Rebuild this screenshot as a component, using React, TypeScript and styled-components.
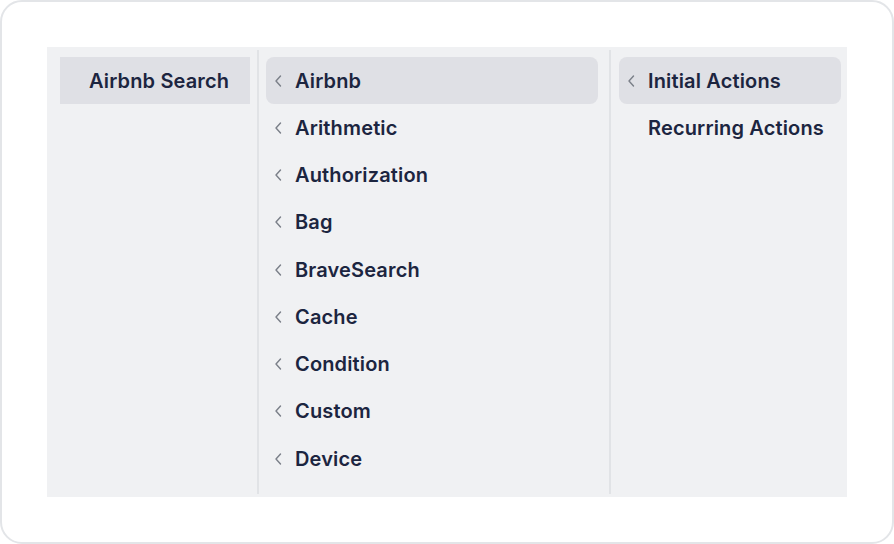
import { createGlobalStyle, styled } from "styled-components";

const GlobalStyle = createGlobalStyle`
  html, body {
    margin: 0;
    padding: 0;
    background: #ffffff;
  }
  body {
    font-family: Inter, "Noto Sans", "Liberation Sans", sans-serif;
  }
`;

const categories = [
  "Airbnb",
  "Arithmetic",
  "Authorization",
  "Bag",
  "BraveSearch",
  "Cache",
  "Condition",
  "Custom",
  "Device",
];

const actions = ["Initial Actions", "Recurring Actions"];

function Chevron() {
  return (
    <ChevronIcon viewBox="0 0 8 14" aria-hidden>
      <path
        d="M6.5 2 L2 7 L6.5 12"
        fill="none"
        stroke="currentColor"
        strokeWidth="1.4"
        strokeLinecap="round"
        strokeLinejoin="round"
      />
    </ChevronIcon>
  );
}

export default function App() {
  return (
    <>
      <GlobalStyle />
      <Card>
        <Browser>
          <Column $width={210} $padLeft={13} $padRight={7}>
            <Item $active $square>
              <ChevronSlot />
              <Label>Airbnb Search</Label>
            </Item>
          </Column>
          <Divider />
          <Column $width={350} $padLeft={7} $padRight={11}>
            {categories.map((name, i) => (
              <Item key={name} $active={i === 0}>
                <ChevronSlot>
                  <Chevron />
                </ChevronSlot>
                <Label>{name}</Label>
              </Item>
            ))}
          </Column>
          <Divider />
          <Column $width={236} $padLeft={8} $padRight={6}>
            {actions.map((name, i) => (
              <Item key={name} $active={i === 0}>
                <ChevronSlot>{i === 0 && <Chevron />}</ChevronSlot>
                <Label>{name}</Label>
              </Item>
            ))}
          </Column>
        </Browser>
      </Card>
    </>
  );
}

const Card = styled.div`
  box-sizing: border-box;
  width: 894px;
  height: 544px;
  border: 2px solid #e3e5e8;
  border-radius: 22px;
  background: #ffffff;
  padding: 45px 45px 46px 45px;
`;

const Browser = styled.div`
  display: flex;
  width: 800px;
  height: 450px;
  background: #f0f1f3;
`;

const Column = styled.div<{ $width: number; $padLeft: number; $padRight: number }>`
  box-sizing: border-box;
  flex: 0 0 ${(p) => p.$width}px;
  display: flex;
  flex-direction: column;
  padding: 10px ${(p) => p.$padRight}px 0 ${(p) => p.$padLeft}px;
`;

const Divider = styled.div`
  flex: 0 0 2px;
  margin: 3px 0;
  background: #e1e3e6;
`;

const Item = styled.div<{ $active?: boolean; $square?: boolean }>`
  display: flex;
  align-items: center;
  height: 47.25px;
  flex-shrink: 0;
  border-radius: ${(p) => (p.$square ? 0 : 8)}px;
  background: ${(p) => (p.$active ? "#dfe0e5" : "transparent")};
  color: #1c2540;
`;

const ChevronSlot = styled.span`
  display: flex;
  align-items: center;
  width: 29px;
  padding-left: 8px;
  box-sizing: border-box;
  color: #7a7f88;
`;

const ChevronIcon = styled.svg`
  width: 8px;
  height: 14px;
`;

const Label = styled.span`
  font-size: 20px;
  font-weight: 600;
  letter-spacing: 0.15px;
  white-space: nowrap;
`;
